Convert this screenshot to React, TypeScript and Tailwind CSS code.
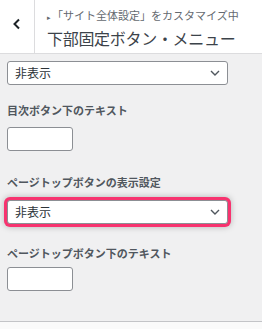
import React from "react";

const font = { fontFamily: '"Noto Sans CJK JP", "Noto Sans", sans-serif' };

function Chevron() {
  return (
    <svg width="10" height="6" viewBox="0 0 10 6" className="absolute right-[7px] top-1/2 -translate-y-1/2">
      <polyline points="1,1 5,5 9,1" fill="none" stroke="#50575e" strokeWidth="1.4" />
    </svg>
  );
}

function Select({ highlight }: { highlight?: boolean }) {
  return (
    <div
      className={
        "relative w-[221px] h-[24px] bg-white border border-[#8c8f94] rounded-[3px] flex items-center pl-[7px] text-[12px] text-[#2c3338] " +
        (highlight ? "shadow-[0_0_0_3px_#f7336f,0_0_6px_3px_rgba(0,0,0,0.25)]" : "")
      }
    >
      <span className="leading-none">非表示</span>
      <Chevron />
    </div>
  );
}

function Input() {
  return <div className="w-[66px] h-[24px] bg-white border border-[#8c8f94] rounded-[3px]" />;
}

export default function App() {
  return (
    <div className="w-[262px] h-[329px] bg-[#f0f0f1] flex flex-col overflow-hidden" style={font}>
      <div className="h-[54px] bg-white border-b border-[#dcdcde] flex shrink-0">
        <div className="w-[35px] border-r border-[#dcdcde] flex items-center justify-center">
          <svg width="10" height="12" viewBox="0 0 10 12" className="-mt-[6px]">
            <polyline points="7,1.5 2.5,6 7,10.5" fill="none" stroke="#1d2327" strokeWidth="2" />
          </svg>
        </div>
        <div className="pl-[12px] pt-[8px] flex flex-col">
          <div className="text-[11px] leading-[14px] text-[#646970] whitespace-nowrap">
            <span className="text-[7px] mr-[1px]">▸</span>「サイト全体設定」をカスタマイズ中
          </div>
          <div className="text-[16px] leading-[20px] mt-[4px] font-normal text-[#3c434a] whitespace-nowrap tracking-[-0.3px]">
            下部固定ボタン・メニュー
          </div>
        </div>
      </div>
      <div className="flex-1 pl-[7px] pt-[7px] flex flex-col">
        <Select />
        <div className="mt-[18px] text-[11px] leading-[14px] font-semibold text-[#50575e]">目次ボタン下のテキスト</div>
        <div className="mt-[10px]"><Input /></div>
        <div className="mt-[24px] text-[11px] leading-[14px] font-semibold text-[#50575e]">ページトップボタンの表示設定</div>
        <div className="mt-[11px]"><Select highlight /></div>
        <div className="mt-[22px] text-[11px] leading-[14px] font-semibold text-[#50575e]">ページトップボタン下のテキスト</div>
        <div className="mt-[7px]"><Input /></div>
      </div>
      <div className="h-[8px] shrink-0 bg-[#fafafa] border-t border-[#c3c4c7]" />
    </div>
  );
}
